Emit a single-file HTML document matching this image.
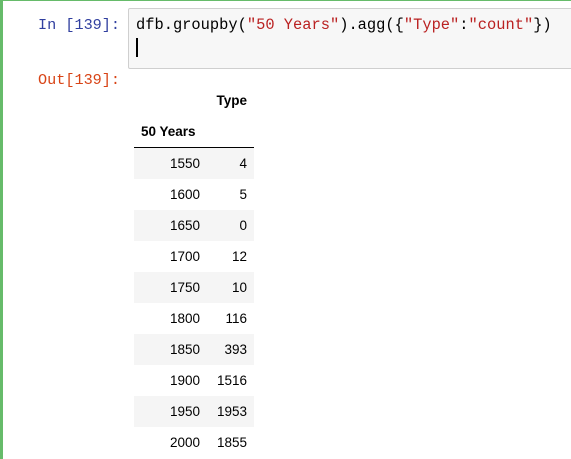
<!DOCTYPE html>
<html><head><style>
body{margin:0;width:571px;height:459px;overflow:hidden;background:#fff;font-family:"Liberation Sans",Arial,sans-serif;position:relative}
.gl{position:absolute;left:0;top:0;width:3px;height:459px;background:#66bb6a}
.gt{position:absolute;left:0;top:0;width:571px;height:1px;background:#66bb6a}
.pr{position:absolute;font-family:"Liberation Mono",monospace;font-size:15.2px}
.inp{position:absolute;left:128px;top:8px;width:470px;height:59px;background:#f7f7f7;border:1px solid #cfcfcf;border-radius:2px}
.code{position:absolute;left:136px;top:16px;font-family:"Liberation Mono",monospace;font-size:15.4px;color:#000}
.s{color:#ba2121}
.cur{position:absolute;left:136px;top:38px;width:2px;height:19px;background:#000}
table{position:absolute;left:134px;top:85px;border-collapse:collapse;font-size:13.5px}
td,th{height:31px;padding:0;text-align:right}
th{font-weight:bold}
</style></head><body>
<div class="gt"></div><div class="gl"></div>
<div class="pr" style="left:38px;top:16px;color:#303f9f">In [139]:</div>
<div class="inp"></div>
<div class="code">dfb.groupby(<span class="s">"50 Years"</span>).agg({<span class="s">"Type"</span>:<span class="s">"count"</span>})</div>
<div class="cur"></div>
<div class="pr" style="left:38px;top:71px;color:#d84315">Out[139]:</div>
<table>
<tr><th style="width:73px"></th><th style="width:40px;padding-right:7px">Type</th></tr>
<tr style="border-bottom:1px solid #000"><th style="text-align:left;padding-left:7px">50 Years</th><th></th></tr>
<tr style="background:#f5f5f5"><td style="padding-right:7px">1550</td><td style="padding-right:7px">4</td></tr>
<tr><td style="padding-right:7px">1600</td><td style="padding-right:7px">5</td></tr>
<tr style="background:#f5f5f5"><td style="padding-right:7px">1650</td><td style="padding-right:7px">0</td></tr>
<tr><td style="padding-right:7px">1700</td><td style="padding-right:7px">12</td></tr>
<tr style="background:#f5f5f5"><td style="padding-right:7px">1750</td><td style="padding-right:7px">10</td></tr>
<tr><td style="padding-right:7px">1800</td><td style="padding-right:7px">116</td></tr>
<tr style="background:#f5f5f5"><td style="padding-right:7px">1850</td><td style="padding-right:7px">393</td></tr>
<tr><td style="padding-right:7px">1900</td><td style="padding-right:7px">1516</td></tr>
<tr style="background:#f5f5f5"><td style="padding-right:7px">1950</td><td style="padding-right:7px">1953</td></tr>
<tr><td style="padding-right:7px">2000</td><td style="padding-right:7px">1855</td></tr>
</table>
</body></html>
